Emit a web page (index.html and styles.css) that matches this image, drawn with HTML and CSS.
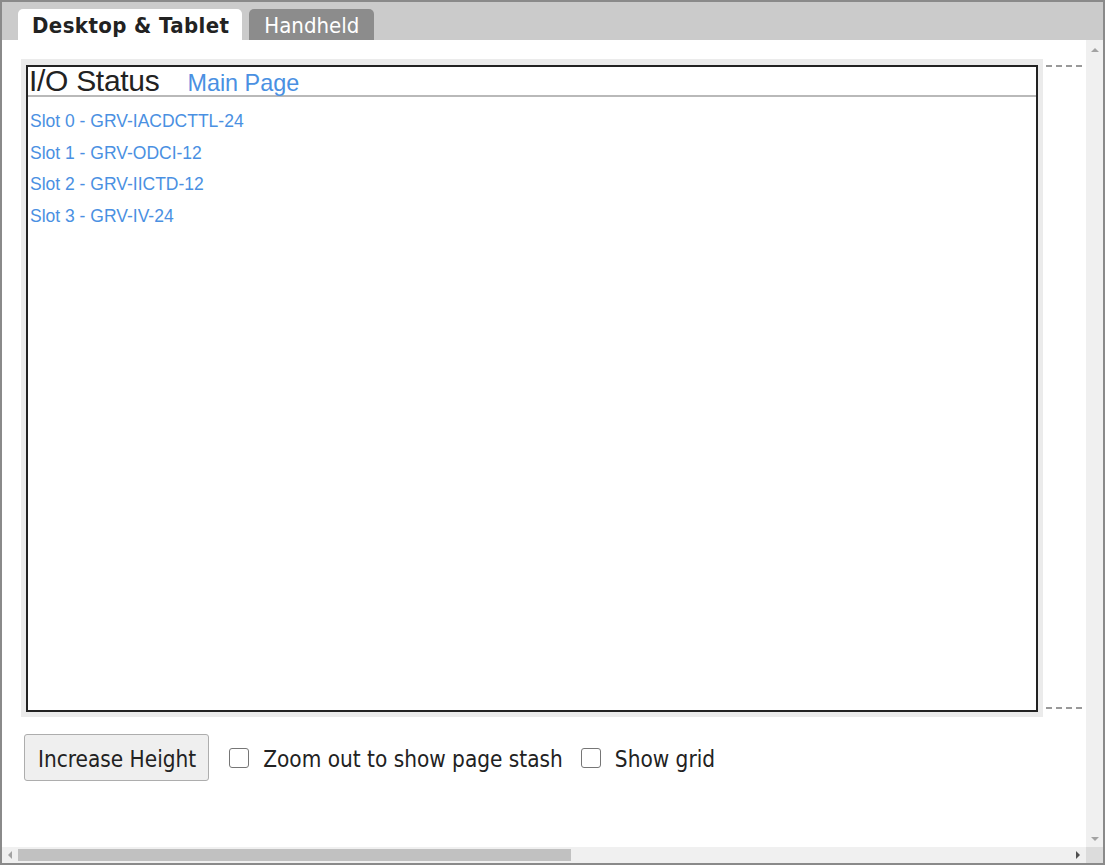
FILE: index.html
```html
<!DOCTYPE html>
<html lang="en">

<head>
    <meta charset="UTF-8">
    <title>I/O Status</title>
    <link rel="stylesheet" href="styles.css">
</head>

<body>
    <div class="window">
        <div class="tabbar">
            <div class="tab active">Desktop &amp; Tablet</div>
            <div class="tab">Handheld</div>
        </div>
        <div class="main">
            <div class="viewport">
                <div class="stage">
                    <div class="panel">
                        <div class="page">
                            <div class="heading">
                                <span class="title">I/O Status</span>
                                <a class="home" href="#">Main Page</a>
                            </div>
                            <div class="slots">
                                <a href="#">Slot 0 - GRV-IACDCTTL-24</a>
                                <a href="#">Slot 1 - GRV-ODCI-12</a>
                                <a href="#">Slot 2 - GRV-IICTD-12</a>
                                <a href="#">Slot 3 - GRV-IV-24</a>
                            </div>
                        </div>
                    </div>
                    <div class="guides">
                        <div class="guide"></div>
                        <div class="guide"></div>
                    </div>
                </div>
                <div class="controls">
                    <button class="btn">Increase Height</button>
                    <label class="check"><input type="checkbox"> <span>Zoom out to show page stash</span></label>
                    <label class="check"><input type="checkbox"> <span>Show grid</span></label>
                </div>
            </div>
            <div class="vscroll">
                <span class="arrow up"></span>
                <span class="arrow down"></span>
            </div>
        </div>
        <div class="hbar">
            <div class="htrack">
                <span class="arrow left"></span>
                <div class="thumb"></div>
                <span class="arrow right"></span>
            </div>
            <div class="corner"></div>
        </div>
    </div>
</body>

</html>
```

FILE: styles.css
```css
body {
    margin: 0;
    font-family: "DejaVu Sans Condensed", "DejaVu Sans", sans-serif;
    font-stretch: condensed;
    color: #222;
}

.window {
    width: 1105px;
    height: 865px;
    box-sizing: border-box;
    border: 2px solid #8a8a8a;
    display: flex;
    flex-direction: column;
    overflow: hidden;
    background-color: #fff;
}

.tabbar {
    height: 38px;
    box-sizing: border-box;
    background-color: #cbcbcb;
    padding: 7px 0 0 16px;
    display: flex;
    gap: 7px;
}

.tab {
    height: 31px;
    box-sizing: border-box;
    padding: 3px 15px 0;
    border-radius: 5px 5px 0 0;
    background-color: #8c8c8c;
    color: #fff;
    font-size: 22px;
    line-height: 27px;
}

.tab.active {
    background-color: #fff;
    color: #222;
    font-weight: bold;
    letter-spacing: 0.4px;
    padding: 3px 13px 0 14px;
}

.main {
    flex: 1;
    display: flex;
    min-height: 0;
}

.viewport {
    flex: 1;
    overflow: hidden;
    padding: 19px 0 0 19px;
}

.stage {
    display: flex;
}

.panel {
    width: 1022px;
    height: 658px;
    box-sizing: border-box;
    background-color: #ebebeb;
    padding: 6px 5px 5px;
}

.page {
    height: 100%;
    box-sizing: border-box;
    border: 2px solid #222;
    background-color: #fff;
    font-family: "Liberation Sans", Arial, sans-serif;
}

.heading {
    display: flex;
    align-items: baseline;
    gap: 28px;
    height: 28px;
    line-height: 28px;
    padding-left: 1px;
    border-bottom: 2px solid #b9b9b9;
}

.title {
    font-size: 30px;
    letter-spacing: -0.3px;
    color: #222;
}

.home {
    font-size: 23.4px;
    color: #4a90e2;
    text-decoration: none;
}

.slots {
    display: flex;
    flex-direction: column;
    padding: 9px 0 0 2px;
}

.slots a {
    font-size: 17.5px;
    line-height: 31.7px;
    color: #4a90e2;
    text-decoration: none;
}

.guides {
    width: 36px;
    margin-left: 3px;
    display: flex;
    flex-direction: column;
    justify-content: space-between;
    padding: 6px 0 8px;
}

.guide {
    height: 2px;
    background: repeating-linear-gradient(to right, #999 0 6px, transparent 6px 10px);
}

.controls {
    display: flex;
    align-items: center;
    margin: 17px 0 0 3px;
    gap: 18px;
    font-size: 22.4px;
}

.btn {
    height: 47px;
    margin-right: 2px;
    padding: 2px 12px 0 13px;
    font: inherit;
    font-stretch: condensed;
    color: #222;
    background-color: #efefef;
    border: 1px solid #adadad;
    border-radius: 3px;
}

.check {
    display: flex;
    align-items: center;
    gap: 14px;
    color: #222;
}

.check span {
    padding-top: 3px;
}

.check input {
    appearance: none;
    width: 20px;
    height: 20px;
    margin: 0;
    border: 1px solid #767676;
    border-radius: 3px;
    background-color: #fff;
}

.vscroll {
    width: 17px;
    background-color: #f0f0f0;
    display: flex;
    flex-direction: column;
    align-items: center;
    justify-content: space-between;
    padding: 8px 0 6px;
}

.hbar {
    height: 16px;
    display: flex;
}

.htrack {
    flex: 1;
    background-color: #f0f0f0;
    display: flex;
    align-items: center;
    padding: 0 6px 0 6px;
}

.thumb {
    width: 553px;
    height: 12px;
    background-color: #c1c1c1;
    margin: 0 auto 0 6px;
}

.corner {
    width: 17px;
    background-color: #dcdcdc;
}

.arrow {
    width: 0;
    height: 0;
    border: 4px solid transparent;
}

.arrow.up {
    border-bottom-color: #a3a3a3;
    border-top-width: 0;
}

.arrow.down {
    border-top-color: #a3a3a3;
    border-bottom-width: 0;
}

.arrow.left {
    border-right-color: #a3a3a3;
    border-left-width: 0;
}

.arrow.right {
    border-left-color: #505050;
    border-right-width: 0;
}
```
